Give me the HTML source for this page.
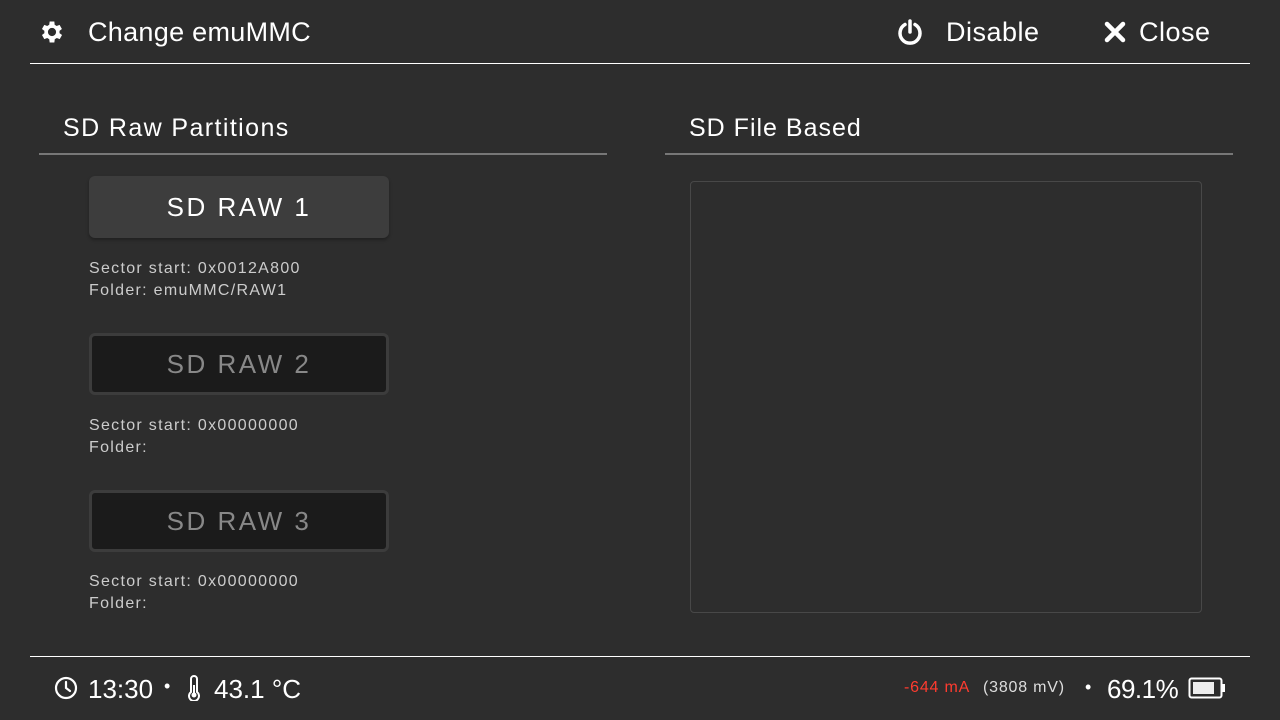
<!DOCTYPE html>
<html><head><meta charset="utf-8"><style>
*{margin:0;padding:0;box-sizing:border-box}
body{width:1280px;height:720px;background:#2d2d2d;font-family:"Liberation Sans","DejaVu Sans",sans-serif;color:#fff;position:relative;overflow:hidden}
.a{position:absolute;white-space:nowrap}
.hr{position:absolute;height:1px;background:#fff}
.btn{position:absolute;left:89px;width:300px;height:62px;border-radius:6px;font-size:26px;letter-spacing:2.5px;text-align:center;line-height:62px}
.b1{background:#3d3d3d;box-shadow:0 2px 3px rgba(0,0,0,.3);color:#fff}
.b2{background:#1b1b1b;border:3px solid #3c3c3c;color:#888;line-height:56px}
.info{position:absolute;left:89px;font-size:16px;color:#ccc;line-height:22px;letter-spacing:1.3px}
</style></head><body>
<svg class="a" style="left:38px;top:18px" width="28" height="28" viewBox="0 0 24 24"><path fill="#fff" d="M19.4 13a7.5 7.5 0 0 0 0-2l2.1-1.6-2-3.5-2.5 1a7 7 0 0 0-1.7-1L15 3h-4l-.4 2.9a7 7 0 0 0-1.7 1l-2.5-1-2 3.5L6.5 11a7.5 7.5 0 0 0 0 2l-2.1 1.6 2 3.5 2.5-1a7 7 0 0 0 1.7 1L11 21h4l.4-2.9a7 7 0 0 0 1.7-1l2.5 1 2-3.5zM13 15.5a3.5 3.5 0 1 1 0-7 3.5 3.5 0 0 1 0 7z" transform="translate(-1 0)"/></svg>
<div class="a" style="left:88px;top:17px;font-size:27px;letter-spacing:.3px">Change emuMMC</div>
<svg class="a" style="left:897px;top:18px" width="26" height="28" viewBox="0 0 26 28"><path d="M8 6.5A10 10 0 1 0 18 6.5" fill="none" stroke="#fff" stroke-width="3.5" stroke-linecap="round"/><path d="M13 3v11" stroke="#fff" stroke-width="3.5" stroke-linecap="round"/></svg>
<div class="a" style="left:946px;top:17px;font-size:27px;letter-spacing:.5px">Disable</div>
<svg class="a" style="left:1104px;top:21px" width="22" height="22" viewBox="0 0 22 22"><path d="M3 3L19 19M19 3L3 19" stroke="#fff" stroke-width="4.5" stroke-linecap="round"/></svg>
<div class="a" style="left:1139px;top:17px;font-size:27px;letter-spacing:.5px">Close</div>
<div class="hr" style="left:30px;top:63px;width:1220px"></div>

<div class="a" style="left:63px;top:114px;font-size:25px;letter-spacing:1.4px">SD Raw Partitions</div>
<div class="hr" style="left:39px;top:153px;width:568px;height:2px;background:#777"></div>
<div class="a" style="left:689px;top:114px;font-size:25px;letter-spacing:1px">SD File Based</div>
<div class="hr" style="left:665px;top:153px;width:568px;height:2px;background:#777"></div>

<div class="btn b1" style="top:176px">SD RAW 1</div>
<div class="info" style="top:258px">Sector start: 0x0012A800<br>Folder: emuMMC/RAW1</div>
<div class="btn b2" style="top:333px">SD RAW 2</div>
<div class="info" style="top:415px">Sector start: 0x00000000<br>Folder:</div>
<div class="btn b2" style="top:490px">SD RAW 3</div>
<div class="info" style="top:571px">Sector start: 0x00000000<br>Folder:</div>

<div class="a" style="left:690px;top:181px;width:512px;height:432px;border:1px solid #484848;border-radius:4px"></div>

<div class="hr" style="left:30px;top:656px;width:1220px"></div>
<svg class="a" style="left:54px;top:676px" width="24" height="24" viewBox="0 0 24 24"><circle cx="12" cy="12" r="10" fill="none" stroke="#fff" stroke-width="2.2"/><path d="M12 6v6l4 3" fill="none" stroke="#fff" stroke-width="2.2" stroke-linecap="round"/></svg>
<div class="a" style="left:88px;top:674px;font-size:26px">13:30</div>
<div class="a" style="left:164px;top:676px;font-size:18px">•</div>
<svg class="a" style="left:186px;top:675px" width="16" height="26" viewBox="0 0 16 26"><path d="M5 17V4a3 3 0 0 1 6 0v13a5 5 0 1 1-6 0z" fill="none" stroke="#fff" stroke-width="2"/><circle cx="8" cy="20" r="2.5" fill="#fff"/><path d="M8 10v9" stroke="#fff" stroke-width="2"/></svg>
<div class="a" style="left:214px;top:674px;font-size:26px">43.1 °C</div>

<div class="a" style="left:904px;top:679px;font-size:16px;color:#ff3b2f;letter-spacing:.8px">-644 mA</div>
<div class="a" style="left:983px;top:679px;font-size:16px;color:#ddd;letter-spacing:.8px">(3808 mV)</div>
<div class="a" style="left:1085px;top:677px;font-size:18px">•</div>
<div class="a" style="left:1107px;top:674px;font-size:26px;letter-spacing:-.5px">69.1%</div>
<svg class="a" style="left:1188px;top:677px" width="38" height="22" viewBox="0 0 38 22"><rect x="1.5" y="1.5" width="32" height="19" rx="2" fill="none" stroke="#fff" stroke-width="2"/><rect x="5" y="5" width="21" height="12" fill="#eee"/><rect x="34" y="7" width="3" height="8" fill="#fff"/></svg>
</body></html>
